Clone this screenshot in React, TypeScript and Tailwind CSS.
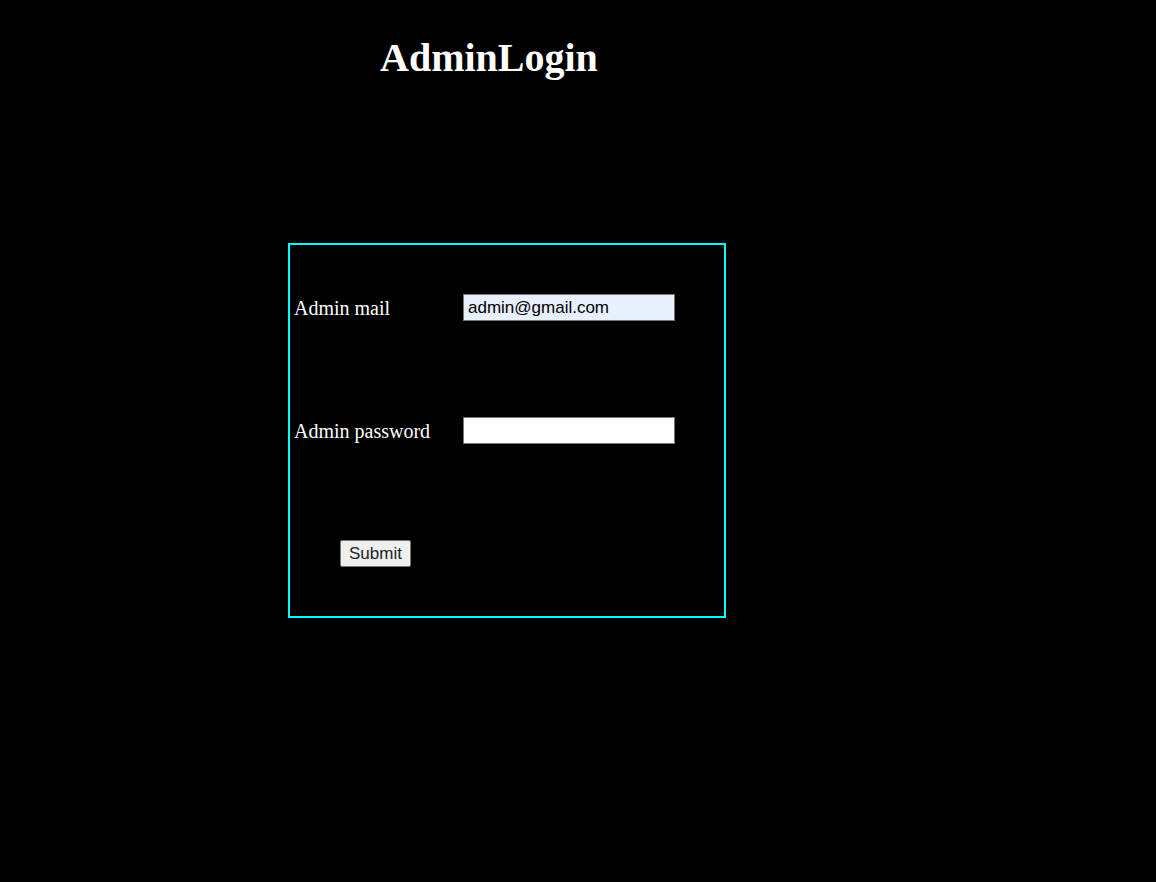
export default function App() {
  return (
    <div className="min-h-[882px] w-full bg-black pt-[35px] font-['Liberation_Serif',serif] text-white">
      <h1 className="pl-[380px] text-[40px] font-bold leading-[46px]">AdminLogin</h1>

      <form className="ml-[288px] mt-[162px] w-[438px] border-2 border-[#00ffff]">
        <div className="grid h-[371px] grid-cols-[171px_1fr] grid-rows-[125px_121px_125px] items-center">
          <label className="pl-[4px] text-[20px]">Admin mail</label>
          <div className="pl-[2px]">
            <input
              type="email"
              defaultValue="admin@gmail.com"
              className="h-[27px] w-[212px] border border-[#767676] bg-[#e8f0fe] px-[4px] font-['Liberation_Sans',sans-serif] text-[17px] text-black outline-none"
            />
          </div>

          <label className="pl-[4px] text-[20px]">Admin password</label>
          <div className="pl-[2px]">
            <input
              type="password"
              className="h-[27px] w-[212px] border border-[#767676] bg-white px-[4px] font-['Liberation_Sans',sans-serif] text-[17px] text-black outline-none"
            />
          </div>

          <div className="flex justify-center">
            <button
              type="button"
              className="h-[27px] w-[71px] rounded-[2px] border border-[#767676] bg-[#efefef] font-['Liberation_Sans',sans-serif] text-[17px] leading-none text-[#222]"
            >
              Submit
            </button>
          </div>
          <div />
        </div>
      </form>
    </div>
  );
}
